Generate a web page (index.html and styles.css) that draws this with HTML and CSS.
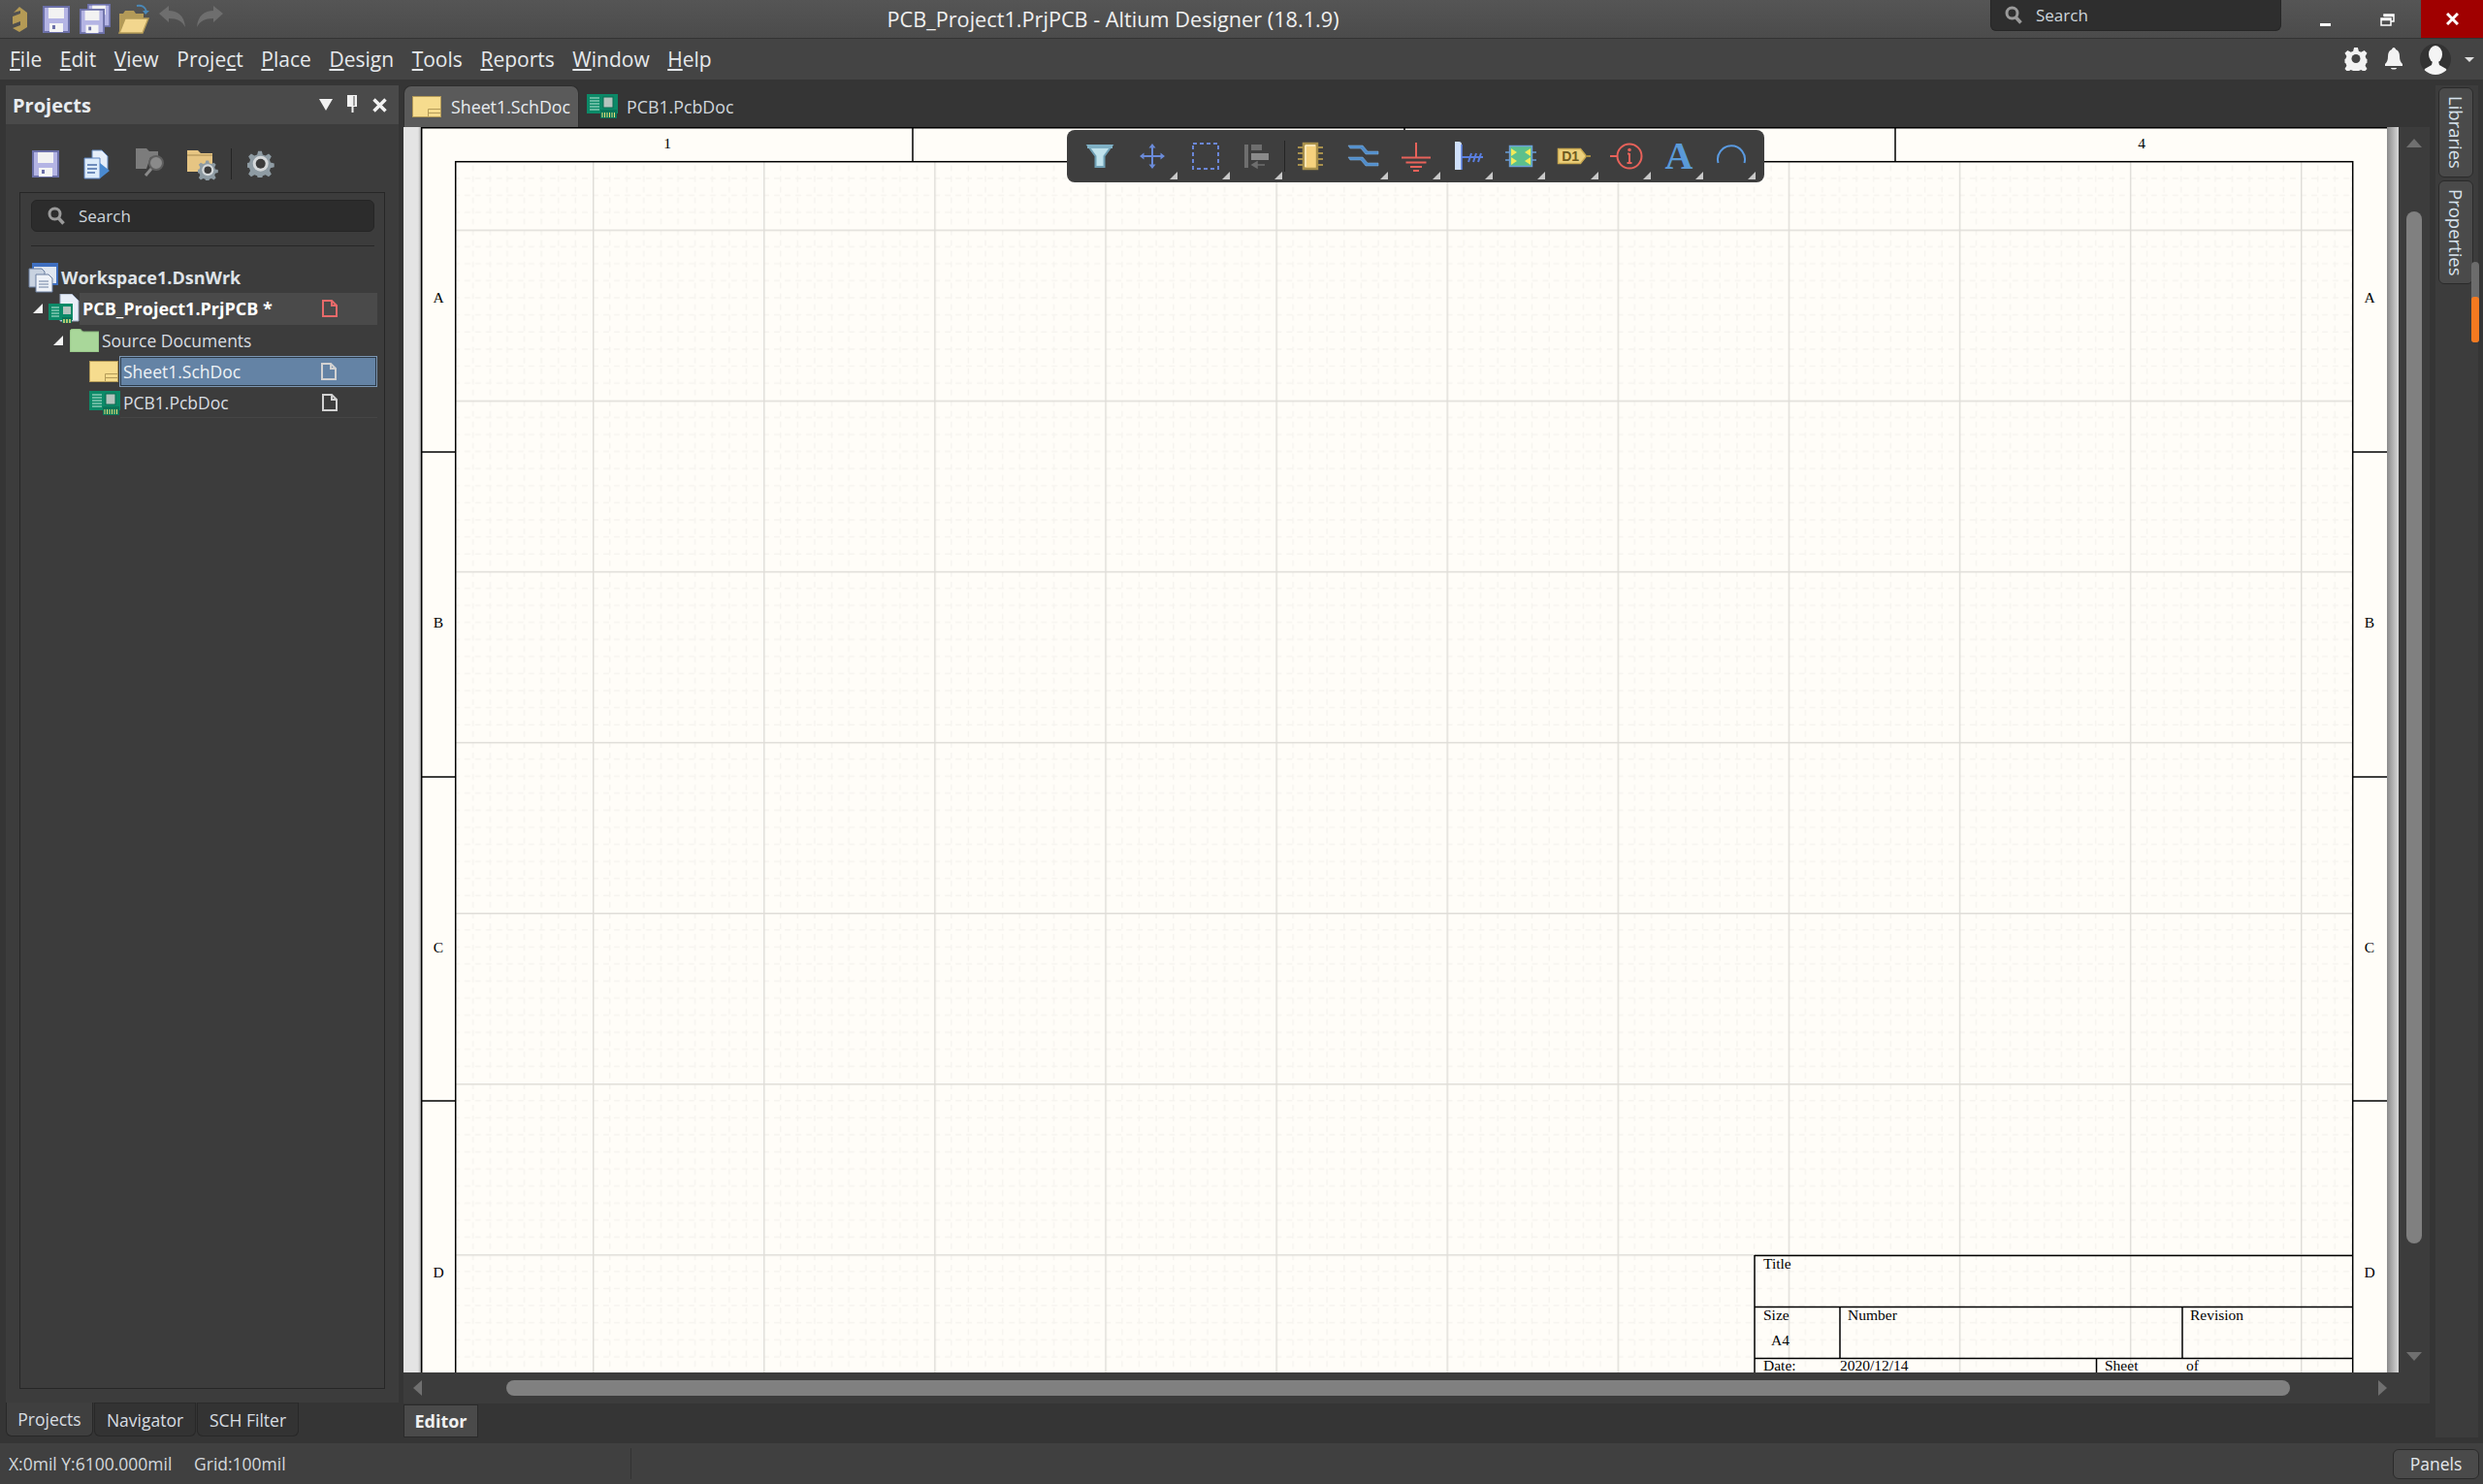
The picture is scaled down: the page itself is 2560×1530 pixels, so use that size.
FILE: index.html
```html
<!DOCTYPE html>
<html lang="en">

<head>
    <meta charset="UTF-8">
    <title>PCB_Project1.PrjPCB - Altium Designer (18.1.9)</title>
    <link rel="stylesheet" href="styles.css">
</head>

<body>
    <svg class="defs" width="0" height="0">
        <defs>
            <symbol id="floppy" viewBox="0 0 28 28">
                <rect x="1" y="1" width="26" height="26" fill="#b4b4e4" stroke="#6c70a8" stroke-width="2" />
                <rect x="6" y="2" width="16" height="11" fill="#f2f2f2" />
                <rect x="7" y="18" width="14" height="9" fill="#f4f4f4" />
                <rect x="10" y="20" width="3" height="4" fill="#6c70a8" />
            </symbol>
            <symbol id="sch" viewBox="0 0 30 22">
                <rect x="0.5" y="0.5" width="29" height="21" fill="#f6dc8e" stroke="#b39a58" />
                <path d="M16.5 21.5v-8h13M17 17.5h12" fill="#f6dc8e" stroke="#b39a58" />
            </symbol>
            <symbol id="pcb" viewBox="0 0 32 25">
                <rect x="0" y="0" width="32" height="20" fill="#0c8a68" />
                <path d="M3 4h10M3 7h10M3 10h10M3 13h10M3 16h10" stroke="#bfe8d8" />
                <rect x="17" y="3" width="10" height="11" fill="#b4c4be" stroke="#0a6a50" />
                <rect x="14" y="16" width="17" height="9" fill="#0a7458" />
                <path d="M16 19v5M18.500 19v5M21 19v5M23.500 19v5M26 19v5M28.500 19v5" stroke="#e8e078" />
            </symbol>
            <symbol id="doc" viewBox="0 0 16 18">
                <path d="M1 1h9l5 5v11H1zM10 1v5h5" fill="none" stroke="currentColor" stroke-width="2" />
            </symbol>
            <symbol id="gear" viewBox="0 0 28 28">
                <path d="M12 1h4l1 4 3 1 3.500-2 3 3-2 3.500 1 3 4 1v4l-4 1-1 3 2 3.500-3 3-3.500-2-3 1-1 4h-4l-1-4-3-1-3.500 2-3-3 2-3.500-1-3-4-1v-4l4-1 1-3-2-3.500 3-3L8 6l3-1z" transform="translate(-.3 -.3) scale(.95)" fill="#8e9ba3" />
                <circle cx="13.700" cy="13.700" r="8" fill="#d4d8da" />
                <circle cx="13.700" cy="13.700" r="5" fill="#3c3c3c" />
            </symbol>
            <symbol id="lens" viewBox="0 0 18 19">
                <circle cx="7.500" cy="7.500" r="5.500" fill="none" stroke="#9a9a9a" stroke-width="3" />
                <path d="M11.500 12l5 5.500" stroke="#9a9a9a" stroke-width="3.500" />
            </symbol>
        </defs>
    </svg>

    <div class="app">
        <header class="titlebar">
            <div class="quick-bar">
                <svg class="logo" viewBox="0 0 18 28">
                    <path d="M9 1l8 6v15l-8 5-7-4 8-3v-4l-8 3V11l8-3V5L3 7z" fill="#b49a55" />
                </svg>
                <svg class="qa-save"><use href="#floppy" /></svg>
                <svg class="qa-saveall" viewBox="0 0 32 32">
                    <use href="#floppy" x="8" y="0" width="24" height="24" />
                    <use href="#floppy" x="0" y="4" width="26" height="28" />
                </svg>
                <svg class="qa-open" viewBox="0 0 32 31">
                    <path d="M1 30V10h4l2-3h9l2 3h8v4" fill="#b39a58" />
                    <path d="M1 30l6-15h24l-6 15z" fill="#f2d68e" stroke="#b39a58" stroke-width="1.500" />
                    <path d="M19 2c5-1 9 1 10 6" fill="none" stroke="#4a88b8" stroke-width="2" />
                    <path d="M25 7h7l-4 4z" fill="#4a88b8" />
                </svg>
                <svg class="qa-undo" viewBox="0 0 30 24">
                    <path d="M1 9l10-8v5c9 0 16 5 17 17-3-6-8-9-17-9v4z" fill="#6e6e6e" />
                </svg>
                <svg class="qa-redo" viewBox="0 0 30 24">
                    <path d="M29 9L19 1v5C10 6 3 11 2 23c3-6 8-9 17-9v4z" fill="#6e6e6e" />
                </svg>
            </div>
            <div class="app-title">PCB_Project1.PrjPCB - Altium Designer (18.1.9)</div>
            <div class="window-bar">
                <div class="top-search">
                    <svg class="lens"><use href="#lens" /></svg>
                    <span>Search</span>
                </div>
                <div class="win-btn btn-min"><span class="win-min"></span></div>
                <div class="win-btn btn-restore">
                    <svg class="win-restore" viewBox="0 0 15 13">
                        <path d="M4 3V1h10v7h-3M1 5h10v7H1zM1 6.500h10M4 2.500h10" fill="none" stroke="#fff" stroke-width="1.500" />
                    </svg>
                </div>
                <div class="win-close">
                    <svg class="close-x" viewBox="0 0 13 13">
                        <path d="M1 1l11 11M12 1L1 12" stroke="#fff" stroke-width="3" />
                    </svg>
                </div>
            </div>
        </header>

        <nav class="menubar">
            <div class="menu-items">
                <span><u>F</u>ile</span>
                <span><u>E</u>dit</span>
                <span><u>V</u>iew</span>
                <span>Proje<u>c</u>t</span>
                <span><u>P</u>lace</span>
                <span><u>D</u>esign</span>
                <span><u>T</u>ools</span>
                <span><u>R</u>eports</span>
                <span><u>W</u>indow</span>
                <span><u>H</u>elp</span>
            </div>
            <div class="menu-tools">
                <svg class="menu-gear" viewBox="0 0 24 24">
                    <path d="M10 0h4l1 4 2.500 1 3.500-2 3 3-2 3.500 1 2.500 1 .5v4l-1 .5-1 2.500 2 3.500-3 3-3.500-2-2.500 1-1 4h-4l-1-4-2.500-1-3.500 2-3-3 2-3.500-1-2.500-1-.5v-4l1-.5 1-2.500L0 6l3-3 3.500 2L9 4z" fill="#f2f2f2" transform="scale(.96) translate(.5 0)" />
                    <circle cx="12" cy="11.500" r="4.500" fill="#444" />
                </svg>
                <svg class="menu-bell" viewBox="0 0 20 24">
                    <path d="M10 0c1 0 2 1 2 2 3 1 4 4 4 7 0 4 1 6 3 8v2H1v-2c2-2 3-4 3-8 0-3 1-6 4-7 0-1 1-2 2-2z" fill="#f2f2f2" />
                    <path d="M7 21h6c0 2-6 2-6 0z" fill="#f2f2f2" />
                </svg>
                <div class="avatar">
                    <svg viewBox="0 0 32 32">
                        <ellipse cx="16" cy="11" rx="7" ry="9" fill="#f4f4f4" />
                        <path d="M13 18h6l1 4 7 4c1 2 1 4 1 6H4c0-2 0-4 1-6l7-4z" fill="#f4f4f4" />
                    </svg>
                </div>
                <span class="caret"></span>
            </div>
        </nav>

        <div class="workspace">
            <aside class="left-col">
                <section class="panel">
                    <div class="panel-head">
                        <span class="panel-title">Projects</span>
                        <span class="panel-arrow"></span>
                        <svg class="panel-pin" viewBox="0 0 12 18">
                            <path d="M1 0h10v12H7.500v6h-2v-6H1z" fill="#f2f2f2" />
                            <path d="M8 1v10" stroke="#4a4a4a" />
                        </svg>
                        <svg class="panel-close" viewBox="0 0 15 15">
                            <path d="M1.500 1.500l12 12M13.500 1.500l-12 12" stroke="#f2f2f2" stroke-width="3.500" />
                        </svg>
                    </div>
                    <div class="panel-tools">
                        <svg class="pt-save"><use href="#floppy" /></svg>
                        <svg class="pt-docs" viewBox="0 0 28 31">
                            <path d="M9 1h10l6 6v16H9z" fill="#e6eef8" stroke="#6a8ec0" />
                            <path d="M1 9h16v21H1z" fill="#dcebfa" stroke="#5a82c0" />
                            <path d="M4 16h10M4 20h10M4 24h8" stroke="#4a6ea8" stroke-width="1.500" />
                            <path d="M17 14l10 8-10 8z" fill="#4a8ad0" />
                        </svg>
                        <svg class="pt-search" viewBox="0 0 32 32">
                            <path d="M1 1h11l3 3h9v5l-8 1-4 12H1z" fill="#7c7c7c" />
                            <circle cx="22" cy="16" r="7" fill="#8a8a8a" stroke="#5e5e5e" stroke-width="2" />
                            <path d="M17 22l-6 7" stroke="#8a8a8a" stroke-width="3" />
                        </svg>
                        <svg class="pt-folder" viewBox="0 0 32 32">
                            <path d="M0 1h11l3 3h12v19H0z" fill="#e6c583" />
                            <path d="M0 6h26" stroke="#a58a50" />
                            <use href="#gear" x="11" y="11" width="21" height="21" />
                        </svg>
                        <span class="tool-divider"></span>
                        <svg class="pt-gear"><use href="#gear" /></svg>
                    </div>
                    <div class="panel-box">
                        <div class="panel-search">
                            <svg class="lens"><use href="#lens" /></svg>
                            <span>Search</span>
                        </div>
                        <div class="tree">
                            <div class="tree-row lvl-0">
                                <svg class="ic-workspace" viewBox="0 0 32 32">
                                    <rect x="4" y="1" width="27" height="23" fill="#3f6fc0" />
                                    <rect x="6" y="5" width="23" height="17" fill="#dfe6f0" />
                                    <path d="M1 7h13l3 3v16H1z" fill="#c8d2e0" stroke="#6a7ea0" />
                                    <path d="M8 13h13l4 4v14H8z" fill="#eef2f8" stroke="#6a7ea0" />
                                    <path d="M11 20h10M11 23h10M11 26h10" stroke="#6a7ea0" />
                                </svg>
                                <span class="label-bold">Workspace1.DsnWrk</span>
                            </div>
                            <div class="tree-row lvl-1">
                                <span class="expander"></span>
                                <svg class="ic-project" viewBox="0 0 32 30">
                                    <path d="M12 0h12l7 7v21H12z" fill="#e8eef8" stroke="#9aa8c0" />
                                    <rect x="0" y="10" width="25" height="17" fill="#0c8a68" />
                                    <path d="M3 14h8M3 17h8M3 20h8M3 23h8" stroke="#bfe8d8" />
                                    <rect x="15" y="13" width="8" height="8" fill="#b4c4be" />
                                    <path d="M14 24h10v6H14z" fill="#0a7458" />
                                    <path d="M16 26v4M19 26v4M22 26v4" stroke="#e8e078" stroke-width="1.500" />
                                </svg>
                                <div class="row-label is-project">
                                    <span>PCB_Project1.PrjPCB *</span>
                                    <svg class="ic-doc doc-red"><use href="#doc" /></svg>
                                </div>
                            </div>
                            <div class="tree-row lvl-2">
                                <span class="expander"></span>
                                <svg class="ic-folder" viewBox="0 0 30 24">
                                    <path d="M0 24V3c0-1 1-3 3-3h7c2 0 2 3 4 3h16v21z" fill="#a9d79a" stroke="#8ab87c" />
                                </svg>
                                <div class="row-label"><span>Source Documents</span></div>
                            </div>
                            <div class="tree-row lvl-3">
                                <svg class="ic-sch"><use href="#sch" /></svg>
                                <div class="row-label is-selected">
                                    <span>Sheet1.SchDoc</span>
                                    <svg class="ic-doc"><use href="#doc" /></svg>
                                </div>
                            </div>
                            <div class="tree-row lvl-3">
                                <svg class="ic-pcb"><use href="#pcb" /></svg>
                                <div class="row-label is-last">
                                    <span>PCB1.PcbDoc</span>
                                    <svg class="ic-doc"><use href="#doc" /></svg>
                                </div>
                            </div>
                        </div>
                    </div>
                </section>
                <div class="panel-tabs">
                    <span class="panel-tab is-active">Projects</span>
                    <span class="panel-tab">Navigator</span>
                    <span class="panel-tab">SCH Filter</span>
                </div>
            </aside>

            <main class="center-col">
                <div class="doc-tabs">
                    <div class="doc-tab is-active">
                        <svg class="ic-sch"><use href="#sch" /></svg>
                        <span>Sheet1.SchDoc</span>
                    </div>
                    <div class="doc-tab">
                        <svg class="ic-pcb"><use href="#pcb" /></svg>
                        <span>PCB1.PcbDoc</span>
                    </div>
                </div>

                <div class="editor">
                    <div class="editor-row">
                        <div class="strip-left"></div>
                        <svg class="sheet" viewBox="434 131 2027 1284">
                            <defs>
                                <pattern id="grid" x="611" y="236.6" width="176.1" height="176.1" patternUnits="userSpaceOnUse">
                                    <g stroke="#f6f4ef" stroke-width="1.500" stroke-dasharray="6 5" fill="none">
                                        <path d="M17.600 0v176M35.200 0v176M52.800 0v176M70.400 0v176M88 0v176M105.700 0v176M123.300 0v176M140.900 0v176M158.500 0v176" />
                                        <path d="M0 17.600h176M0 35.200h176M0 52.800h176M0 70.400h176M0 88h176M0 105.700h176M0 123.300h176M0 140.900h176M0 158.500h176" />
                                    </g>
                                    <path d="M.7 0v176.100M0 .7h176.100" stroke="#dfddd8" stroke-width="1.500" />
                                </pattern>
                            </defs>
                            <rect x="434" y="131" width="2027" height="1284" fill="#fffdf8" />
                            <rect x="470" y="167" width="1956" height="1260" fill="url(#grid)" />
                            <g fill="none" stroke="#000" stroke-width="1.500">
                                <path d="M434.700 131v1284M434 131.700h2027" />
                                <rect x="469.700" y="166.700" width="1956" height="1300" />
                                <path d="M941 132v35M1448 132v35M1954 132v35" />
                                <path d="M435 466h35M435 801h35M435 1135h35M2426 466h35M2426 801h35M2426 1135h35" />
                                <path d="M1809 1294.500h617M1809 1347.500h617M1809 1400.500h617M1809 1294v121M1897 1347v53M2250 1347v53M2161.500 1400v15" />
                            </g>
                            <g class="sheet-text" text-anchor="middle">
                                <text x="688" y="153">1</text>
                                <text x="1194" y="153">2</text>
                                <text x="1701" y="153">3</text>
                                <text x="2208" y="153">4</text>
                                <text x="452" y="312">A</text>
                                <text x="452" y="647">B</text>
                                <text x="452" y="982">C</text>
                                <text x="452" y="1317">D</text>
                                <text x="2443" y="312">A</text>
                                <text x="2443" y="647">B</text>
                                <text x="2443" y="982">C</text>
                                <text x="2443" y="1317">D</text>
                            </g>
                            <g class="sheet-text">
                                <text x="1818" y="1308">Title</text>
                                <text x="1818" y="1361">Size</text>
                                <text x="1905" y="1361">Number</text>
                                <text x="2258" y="1361">Revision</text>
                                <text x="1826" y="1387">A4</text>
                                <text x="1818" y="1413">Date:</text>
                                <text x="1897" y="1413">2020/12/14</text>
                                <text x="2170" y="1413">Sheet</text>
                                <text x="2254" y="1413">of</text>
                            </g>
                        </svg>
                        <div class="strip-right"></div>
                        <div class="vscroll">
                            <span class="arrow-up"></span>
                            <span class="vthumb"></span>
                            <span class="arrow-down"></span>
                        </div>
                    </div>
                    <div class="hscroll">
                        <span class="arrow-left"></span>
                        <span class="hthumb"></span>
                        <span class="arrow-right"></span>
                    </div>

                    <div class="float-tools">
                        <div class="tool">
                            <svg viewBox="0 0 36 36">
                                <path d="M5.500 7h25l-8 11v11h-9V18z" fill="#bfe2ec" stroke="#6f9fb4" stroke-width="2" />
                                <path d="M5 6h26v4H5z" fill="#7fb0c4" />
                            </svg>
                        </div>
                        <div class="tool has-menu">
                            <svg viewBox="0 0 36 36">
                                <path d="M18 6v24M6 18h24" stroke="#6a8ad8" stroke-width="2" />
                                <path d="M18 5l-3.500 4.500h7zM18 31l-3.500-4.500h7zM5 18l4.500-3.500v7zM31 18l-4.500-3.500v7z" fill="#6a8ad8" />
                            </svg>
                        </div>
                        <div class="tool has-menu">
                            <svg viewBox="0 0 36 36">
                                <rect x="5" y="5" width="26" height="26" fill="none" stroke="#6a86d8" stroke-width="2" stroke-dasharray="4 3" />
                            </svg>
                        </div>
                        <div class="tool has-menu">
                            <svg viewBox="0 0 36 36">
                                <rect x="4" y="6" width="4" height="24" fill="#6e6e6e" />
                                <rect x="11" y="6" width="11" height="6" fill="#6e6e6e" />
                                <rect x="11" y="15" width="18" height="7" fill="#8a8a8a" />
                                <path d="M12 27h13M17 24l-5 3 5 3z" stroke="#6e6e6e" fill="#6e6e6e" stroke-width="1.500" />
                            </svg>
                        </div>
                        <span class="tool-divider"></span>
                        <div class="tool">
                            <svg viewBox="0 0 36 36">
                                <path d="M5 9h26M5 15h26M5 21h26M5 27h26" stroke="#a8904c" stroke-width="2" />
                                <rect x="11" y="5" width="14" height="26" fill="#f6d27e" stroke="#a8904c" stroke-width="2.500" />
                                <path d="M13 7h10M13 7v22" stroke="#fbeec8" stroke-width="1.500" fill="none" />
                            </svg>
                        </div>
                        <div class="tool has-menu">
                            <svg viewBox="0 0 36 36">
                                <path d="M3 7h15l5 6h11v3H21l-5-6H5zM3 19h15l5 6h11v3H21l-5-6H5z" fill="#4f8cca" stroke="#8ab8e4" stroke-width=".5" />
                            </svg>
                        </div>
                        <div class="tool has-menu">
                            <svg viewBox="0 0 36 36">
                                <path d="M18 4v15M3 19.500h30M7.500 24.500h21M12 29h12M15 33h6" stroke="#e8625a" stroke-width="2" fill="none" />
                            </svg>
                        </div>
                        <div class="tool has-menu">
                            <svg viewBox="0 0 36 36">
                                <path d="M4 3h4c2 0 3 1 3 3v26H4z" fill="#cfe0fa" />
                                <path d="M11 6v26" stroke="#5a7fe0" stroke-width="1.500" />
                                <path d="M11 19h22M18 24l3-9M23 24l3-9M28 24l3-9" stroke="#5a7fe0" stroke-width="2" />
                            </svg>
                        </div>
                        <div class="tool has-menu">
                            <svg viewBox="0 0 36 36">
                                <rect x="6.500" y="7.500" width="23" height="21" fill="#5cc08c" stroke="#6a9fd8" stroke-width="1.500" />
                                <path d="M2 14h4M2 22h4M30 14h4M30 22h4" stroke="#6a9fd8" stroke-width="1.500" />
                                <path d="M8 10l6 4-6 4zM8 19l6 4-6 4zM28 10l-6 4 6 4zM28 19l-6 4 6 4z" fill="#f0ea5a" />
                            </svg>
                        </div>
                        <div class="tool has-menu">
                            <svg viewBox="0 0 36 36">
                                <path d="M2.500 10.500h23l6 7.500-6 7.500h-23z" fill="#ecd07c" stroke="#c8a850" stroke-width="1.500" />
                                <path d="M31 18h6" stroke="#a88c40" stroke-width="2" />
                            </svg>
                            <span class="port-text">D1</span>
                        </div>
                        <div class="tool has-menu">
                            <svg viewBox="0 0 36 36">
                                <circle cx="21" cy="18" r="12.500" fill="none" stroke="#e8625a" stroke-width="2" />
                                <path d="M1 18h7M21 15v10M18.500 25h5M19 15.500h2" stroke="#e8625a" stroke-width="2" fill="none" />
                                <circle cx="21" cy="11.500" r="1.800" fill="#e8625a" />
                            </svg>
                        </div>
                        <div class="tool has-menu">
                            <span class="a-text">A</span>
                        </div>
                        <div class="tool has-menu">
                            <svg viewBox="0 0 36 36">
                                <path d="M4.500 25a14 14 0 1 1 27 0" fill="none" stroke="#5a9ae0" stroke-width="2" />
                            </svg>
                        </div>
                    </div>
                </div>

                <div class="editor-tabs">
                    <span class="editor-tab">Editor</span>
                </div>
            </main>

            <aside class="right-dock">
                <span class="dock-tab dock-libraries">Libraries</span>
                <span class="dock-tab dock-properties">Properties</span>
                <span class="dock-scroll"><span class="dock-scroll-fill"></span></span>
            </aside>
        </div>

        <footer class="statusbar">
            <span class="status-pos">X:0mil Y:6100.000mil</span>
            <span class="status-grid">Grid:100mil</span>
            <span class="status-divider"></span>
            <span class="panels-btn">Panels</span>
        </footer>
    </div>
</body>

</html>
```

FILE: styles.css
```css
* {
    box-sizing: border-box;
}

body {
    margin: 0;
    background-color: #353535;
    font-family: "Open Sans", "Noto Sans", sans-serif;
    font-size: 18px;
    color: #d8dde2;
    overflow: hidden;
}

svg {
    display: block;
    flex: none;
}

.defs {
    position: absolute;
}

.app {
    display: flex;
    flex-direction: column;
    width: 2560px;
    height: 1530px;
}

/* title bar */
.titlebar {
    display: flex;
    height: 40px;
    background: linear-gradient(#555, #4b4b4b);
    border-bottom: 1px solid #333;
}

.quick-bar {
    display: flex;
    align-items: center;
    width: 243px;
    padding-left: 11px;
}

.logo {
    width: 18px;
    height: 28px;
}

.qa-save {
    width: 28px;
    height: 28px;
    margin-left: 15px;
}

.qa-saveall {
    width: 32px;
    height: 32px;
    margin-left: 10px;
}

.qa-open {
    width: 32px;
    height: 31px;
    margin-left: 8px;
}

.qa-undo {
    width: 30px;
    height: 24px;
    margin-left: 9px;
    margin-bottom: 6px;
}

.qa-redo {
    width: 30px;
    height: 24px;
    margin-left: 8px;
    margin-bottom: 6px;
}

.app-title {
    flex: 1;
    text-align: center;
    font-size: 21.700px;
    line-height: 40px;
    color: #f0f0f0;
}

.window-bar {
    display: flex;
    width: 508px;
}

.top-search {
    display: flex;
    align-items: center;
    width: 300px;
    height: 32px;
    padding-left: 14px;
    background-color: #2e2e2e;
    border: 1px solid #262626;
    border-top: none;
    border-radius: 0 0 6px 6px;
    font-size: 17px;
    color: #cfd6dc;
}

.lens {
    width: 18px;
    height: 19px;
    margin-right: 14px;
}

.win-btn {
    display: flex;
    align-items: center;
    justify-content: center;
}

.btn-min {
    width: 90px;
}

.btn-restore {
    width: 38px;
}

.win-min {
    width: 11px;
    height: 3px;
    margin-top: 12px;
    background-color: #fff;
}

.win-restore {
    width: 15px;
    height: 13px;
    margin-top: 1px;
}

.win-close {
    display: flex;
    align-items: center;
    justify-content: center;
    width: 64px;
    margin-left: auto;
    background-color: #a00000;
}

.close-x {
    width: 13px;
    height: 13px;
}

/* menu bar */
.menubar {
    display: flex;
    align-items: center;
    justify-content: space-between;
    height: 42px;
    padding: 0 9px 0 10px;
    background-color: #444;
}

.menu-items {
    display: flex;
    gap: 18.600px;
    font-size: 21px;
    color: #e6e9ec;
}

.menu-tools {
    display: flex;
    align-items: center;
}

.menu-gear {
    width: 24px;
    height: 24px;
}

.menu-bell {
    width: 20px;
    height: 24px;
    margin-left: 17px;
}

.avatar {
    width: 32px;
    height: 32px;
    margin-left: 17px;
    border-radius: 50%;
    background-color: #333;
    overflow: hidden;
}

.caret {
    width: 0;
    height: 0;
    margin-left: 14px;
    border-left: 5px solid transparent;
    border-right: 5px solid transparent;
    border-top: 5px solid #e0e0e0;
}

/* main area */
.workspace {
    display: flex;
    flex: 1;
    min-height: 0;
}

.left-col {
    display: flex;
    flex-direction: column;
    width: 416px;
    padding: 6px 5px 7px 6px;
}

.panel {
    display: flex;
    flex-direction: column;
    flex: 1;
    background-color: #3c3c3c;
}

.panel-head {
    display: flex;
    align-items: center;
    height: 40px;
    padding: 0 12px 0 7px;
    background-color: #4a4a4a;
}

.panel-title {
    flex: 1;
    font-size: 20px;
    font-weight: 700;
    color: #e8ecf0;
}

.panel-arrow {
    width: 0;
    height: 0;
    border-left: 7px solid transparent;
    border-right: 7px solid transparent;
    border-top: 12px solid #f2f2f2;
}

.panel-pin {
    width: 12px;
    height: 18px;
    margin: 0 15px 2px 14px;
}

.panel-close {
    width: 15px;
    height: 15px;
}

.panel-tools {
    display: flex;
    align-items: center;
    height: 70px;
    padding: 12px 0 0 27px;
}

.pt-save {
    width: 28px;
    height: 28px;
}

.pt-docs {
    width: 28px;
    height: 31px;
    margin-left: 25px;
}

.pt-search {
    width: 32px;
    height: 32px;
    margin-left: 25px;
    margin-top: -2px;
}

.pt-folder {
    width: 32px;
    height: 32px;
    margin-left: 22px;
    margin-top: 1px;
}

.tool-divider {
    width: 1px;
    background-color: #242424;
}

.panel-tools .tool-divider {
    height: 32px;
    margin: 0 16px 0 13px;
}

.pt-gear {
    width: 28px;
    height: 28px;
}

.panel-box {
    flex: 1;
    margin: 0 14px 14px;
    padding: 7px 10px 0 11px;
    border: 1px solid #262626;
}

.panel-search {
    display: flex;
    align-items: center;
    height: 33px;
    padding-left: 16px;
    background-color: #2c2c2c;
    border: 1px solid #252525;
    border-radius: 6px;
    font-size: 17px;
    color: #cfd6dc;
}

.tree {
    margin-top: 14px;
    padding-top: 16px;
    border-top: 1px solid #262626;
}

.tree-row {
    display: flex;
    align-items: center;
    height: 32.300px;
    margin: 0 -3px;
}

.lvl-0 {
    padding-left: 0;
}

.lvl-1 {
    padding-left: 5px;
}

.lvl-2 {
    padding-left: 26px;
}

.lvl-3 {
    padding-left: 63px;
}

.expander {
    width: 0;
    height: 0;
    margin-right: 6px;
    border-bottom: 10px solid #f2f2f2;
    border-left: 10px solid transparent;
}

.ic-workspace {
    width: 32px;
    height: 32px;
    margin-right: 2px;
}

.label-bold {
    font-size: 18px;
    font-weight: 700;
    color: #dfe3e8;
}

.ic-project {
    width: 32px;
    height: 30px;
}

.ic-folder {
    width: 30px;
    height: 24px;
    margin-left: 1px;
}

.ic-sch {
    width: 30px;
    height: 22px;
    margin-right: 1px;
}

.ic-pcb {
    width: 32px;
    height: 25px;
}

.row-label {
    display: flex;
    flex: 1;
    align-items: center;
    justify-content: space-between;
    align-self: stretch;
    padding: 0 41px 0 3px;
    font-size: 17.500px;
}

.is-project {
    background-color: #4a4a4a;
    font-weight: 700;
    font-size: 18px;
    color: #fff;
}

.is-selected {
    background-color: #6483a5;
    border: 1px solid #7d98b4;
    outline: 1px solid #2c3a48;
    outline-offset: -2px;
    color: #eef2f6;
}

.is-last {
    border-bottom: 1px solid #454545;
}

.ic-doc {
    width: 16px;
    height: 18px;
    color: #d2d2d2;
}

.doc-red {
    color: #e86a6a;
}

.panel-tabs {
    display: flex;
    height: 35px;
    font-size: 17.500px;
}

.panel-tab {
    display: flex;
    align-items: center;
    justify-content: center;
    width: 105px;
    margin-right: 1px;
    background-color: #333;
    border: 1px solid #282828;
    border-top: 1px solid #2a2a2a;
    border-radius: 0 0 6px 6px;
}

.panel-tab.is-active {
    width: 90px;
    background-color: #3f3f3f;
    border-top: none;
}

.center-col {
    display: flex;
    flex-direction: column;
    width: 2089px;
    padding-top: 6px;
}

.doc-tabs {
    display: flex;
    height: 43px;
}

.doc-tab {
    display: flex;
    align-items: center;
    gap: 9px;
    padding: 0 8px;
    font-size: 17.800px;
    color: #d0d6dc;
}

.doc-tab.is-active {
    width: 181px;
    background-color: #5a5a5a;
    border: 1px solid #2e2e2e;
    border-bottom: none;
    border-radius: 8px 8px 0 0;
    color: #e8ecf0;
}

.editor {
    position: relative;
    display: flex;
    flex-direction: column;
    height: 1316px;
}

.editor-row {
    display: flex;
    height: 1284px;
}

.strip-left {
    width: 18px;
    background: linear-gradient(90deg, #e4e4e4 80%, #d4d4d4 90%, #8c8c8c);
}

.sheet {
    width: 2027px;
    height: 1284px;
}

.sheet-text {
    font-family: "Liberation Serif", serif;
    font-size: 15.500px;
    fill: #000;
}

.strip-right {
    width: 12px;
    background: linear-gradient(90deg, #8a8a8a, #d8d8d8);
}

.vscroll {
    display: flex;
    flex-direction: column;
    align-items: center;
    width: 32px;
    padding-top: 12px;
    background-color: #3c3c3c;
}

.arrow-up {
    width: 0;
    height: 0;
    border-left: 8px solid transparent;
    border-right: 8px solid transparent;
    border-bottom: 9px solid #707070;
}

.vthumb {
    width: 16px;
    height: 1064px;
    margin-top: 66px;
    background-color: #808080;
    border-radius: 8px;
}

.arrow-down {
    width: 0;
    height: 0;
    margin-top: 112px;
    border-left: 8px solid transparent;
    border-right: 8px solid transparent;
    border-top: 9px solid #707070;
}

.hscroll {
    display: flex;
    align-items: center;
    height: 32px;
    background-color: #3c3c3c;
    padding-left: 10px;
}

.arrow-left {
    width: 0;
    height: 0;
    border-top: 8px solid transparent;
    border-bottom: 8px solid transparent;
    border-right: 9px solid #707070;
}

.hthumb {
    width: 1839px;
    height: 16px;
    margin-left: 87px;
    background-color: #808080;
    border-radius: 8px;
}

.arrow-right {
    width: 0;
    height: 0;
    margin-left: 91px;
    border-top: 8px solid transparent;
    border-bottom: 8px solid transparent;
    border-left: 9px solid #707070;
}

.float-tools {
    position: absolute;
    left: 684px;
    top: 3px;
    display: flex;
    align-items: center;
    width: 719px;
    height: 54px;
    padding-left: 7px;
    background-color: #3e3e3e;
    border-radius: 8px;
}

.tool {
    position: relative;
    display: flex;
    align-items: center;
    justify-content: center;
    width: 54.250px;
    height: 54px;
}

.tool svg {
    width: 36px;
    height: 36px;
}

.has-menu::after {
    content: "";
    position: absolute;
    right: 2px;
    bottom: 3px;
    border-bottom: 8px solid #c8c8c8;
    border-left: 8px solid transparent;
}

.float-tools .tool-divider {
    height: 32px;
    margin-right: -1px;
}

.port-text {
    position: absolute;
    left: 15px;
    top: 18px;
    font-family: "Liberation Sans", sans-serif;
    font-size: 14px;
    line-height: 18px;
    font-weight: 700;
    color: #6e5a20;
}

.a-text {
    font-family: "Liberation Serif", serif;
    font-size: 40px;
    line-height: 40px;
    font-weight: 700;
    color: #5a9ad8;
}

.editor-tabs {
    display: flex;
    height: 34px;
    margin-top: 1px;
}

.editor-tab {
    display: flex;
    align-items: center;
    justify-content: center;
    width: 77px;
    background-color: #4a4a4a;
    border: 1px solid #2a2a2a;
    font-size: 18px;
    font-weight: 700;
    color: #f0f0f0;
}

.right-dock {
    position: relative;
    display: flex;
    flex-direction: column;
    width: 44px;
    height: 1394px;
    margin: 6px 0 0 6px;
    padding: 2px 0 0 3px;
    background-color: #3c3c3c;
}

.dock-tab {
    display: flex;
    align-items: center;
    justify-content: center;
    width: 36px;
    writing-mode: vertical-rl;
    background-color: #4a4a4a;
    border: 1px solid #2a2a2a;
    border-left: 1px solid #2a2a2a;
    border-radius: 6px;
    font-size: 18.500px;
    color: #d8e2ec;
}

.dock-libraries {
    height: 93px;
}

.dock-properties {
    height: 107px;
    margin-top: 3px;
}

.dock-scroll {
    position: absolute;
    left: 37px;
    top: 182px;
    width: 8px;
    height: 83px;
    padding-top: 36px;
    background-color: #6c6c6c;
    border-radius: 4px;
}

.dock-scroll-fill {
    display: block;
    height: 100%;
    background-color: #f47a20;
    border-radius: 3px;
}

.statusbar {
    display: flex;
    align-items: center;
    height: 42px;
    padding: 0 4px 0 9px;
    background-color: #404040;
    font-size: 17.500px;
    color: #d4d8dc;
}

.status-pos {
    width: 191px;
}

.status-grid {
    width: 450px;
}

.status-divider {
    width: 1px;
    height: 32px;
    background-color: #333;
}

.panels-btn {
    display: flex;
    align-items: center;
    justify-content: center;
    width: 89px;
    height: 31px;
    margin-left: auto;
    background-color: #4a4a4a;
    border: 1px solid #2a2a2a;
    border-radius: 6px;
    color: #e4e8ec;
}
```
